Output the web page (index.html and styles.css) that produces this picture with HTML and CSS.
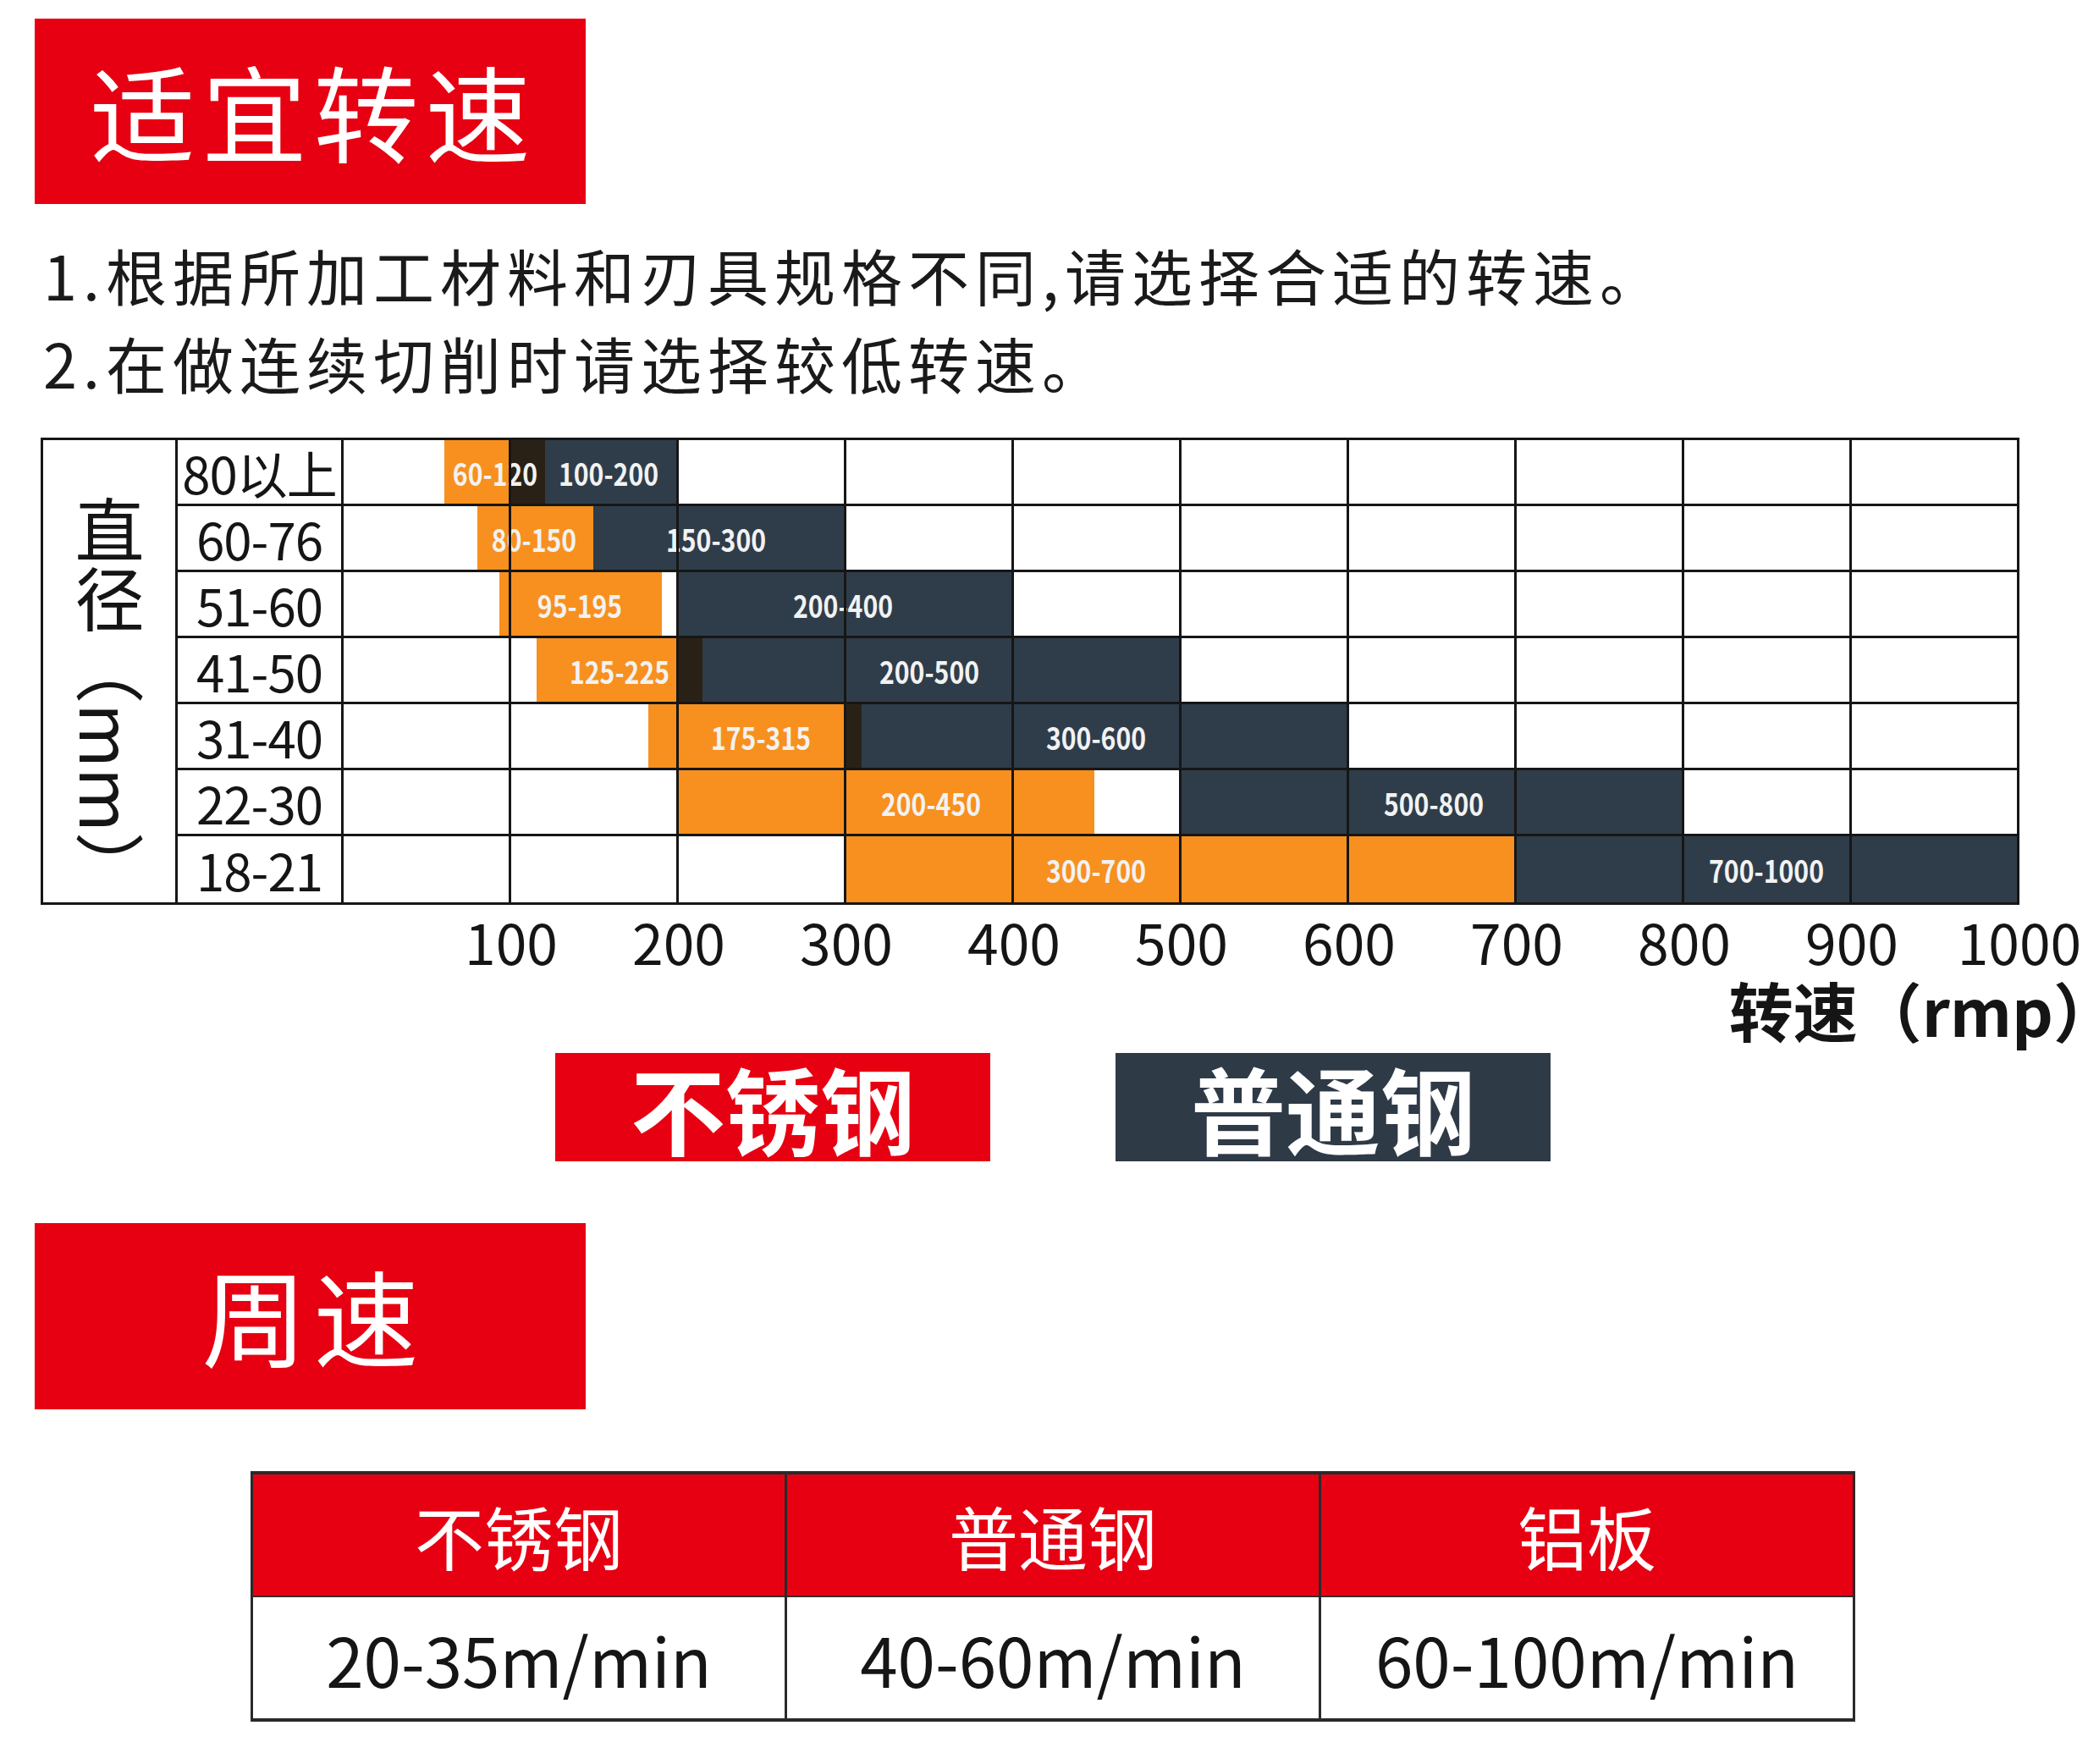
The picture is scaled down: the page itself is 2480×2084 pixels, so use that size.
FILE: index.html
```html
<!DOCTYPE html>
<html lang="zh-CN">
<head>
<meta charset="utf-8">
<title>适宜转速</title>
<link rel="stylesheet" href="styles.css">
</head>
<body>
<div class="page">
  <div class="title-box"><span>适宜转速</span></div>

  <div class="intro">
    <p>1.根据所加工材料和刃具规格不同,请选择合适的转速。</p>
    <p>2.在做连续切削时请选择较低转速。</p>
  </div>

  <div class="chart">
    <div class="ylabel"><span>直径（mm）</span></div>
    <div class="rows">
      <div class="row">
        <div class="rlabel">80以上</div>
        <div class="track">
          <div class="bar orange" style="--a:60;--b:100"></div>
          <div class="bar overlap" style="--a:100;--b:120"></div>
          <div class="bar dark" style="--a:120;--b:200"></div>
          <div class="blabel" style="--c:90.4">60-120</div>
          <div class="blabel" style="--c:158">100-200</div>
        </div>
      </div>
      <div class="row">
        <div class="rlabel">60-76</div>
        <div class="track">
          <div class="bar orange" style="--a:80;--b:149"></div>
          <div class="bar dark" style="--a:149;--b:300"></div>
          <div class="blabel" style="--c:113.6">80-150</div>
          <div class="blabel" style="--c:222">150-300</div>
        </div>
      </div>
      <div class="row">
        <div class="rlabel">51-60</div>
        <div class="track">
          <div class="bar orange" style="--a:93;--b:190"></div>
          <div class="bar dark" style="--a:200;--b:400"></div>
          <div class="blabel" style="--c:140.8">95-195</div>
          <div class="blabel" style="--c:298">200-400</div>
        </div>
      </div>
      <div class="row">
        <div class="rlabel">41-50</div>
        <div class="track">
          <div class="bar orange" style="--a:115;--b:199"></div>
          <div class="bar overlap" style="--a:199;--b:214"></div>
          <div class="bar dark" style="--a:214;--b:500"></div>
          <div class="blabel" style="--c:164.8">125-225</div>
          <div class="blabel" style="--c:349.6">200-500</div>
        </div>
      </div>
      <div class="row">
        <div class="rlabel">31-40</div>
        <div class="track">
          <div class="bar orange" style="--a:182;--b:300"></div>
          <div class="bar overlap" style="--a:300;--b:309"></div>
          <div class="bar dark" style="--a:309;--b:600"></div>
          <div class="blabel" style="--c:248.8">175-315</div>
          <div class="blabel" style="--c:448.8">300-600</div>
        </div>
      </div>
      <div class="row">
        <div class="rlabel">22-30</div>
        <div class="track">
          <div class="bar orange" style="--a:200;--b:448"></div>
          <div class="bar dark" style="--a:500;--b:800"></div>
          <div class="blabel" style="--c:350.4">200-450</div>
          <div class="blabel" style="--c:650.4">500-800</div>
        </div>
      </div>
      <div class="row">
        <div class="rlabel">18-21</div>
        <div class="track">
          <div class="bar orange" style="--a:300;--b:700"></div>
          <div class="bar dark" style="--a:700;--b:1000"></div>
          <div class="blabel" style="--c:448.8">300-700</div>
          <div class="blabel" style="--c:848.8">700-1000</div>
        </div>
      </div>
    </div>
  </div>

  <div class="axis">
    <span>100</span><span>200</span><span>300</span><span>400</span><span>500</span>
    <span>600</span><span>700</span><span>800</span><span>900</span><span>1000</span>
  </div>
  <div class="axis-title">转速（rmp<span class="close-paren">）</span></div>

  <div class="legend">
    <div class="legend-item red">不锈钢</div>
    <div class="legend-item slate">普通钢</div>
  </div>

  <div class="title-box second"><span>周速</span></div>

  <table class="speed-table">
    <thead>
      <tr><th>不锈钢</th><th>普通钢</th><th>铝板</th></tr>
    </thead>
    <tbody>
      <tr><td>20-35m/min</td><td>40-60m/min</td><td>60-100m/min</td></tr>
    </tbody>
  </table>
</div>
</body>
</html>
```

FILE: styles.css
```css
html, body {
  margin: 0;
  padding: 0;
  background: #ffffff;
  overflow-x: hidden;
}

body {
  width: 2480px;
  font-family: "Noto Sans CJK SC", "Noto Sans", sans-serif;
  color: #151515;
}

.page {
  padding-top: 22px;
}

/* red section titles */
.title-box {
  margin-left: 41px;
  width: 651px;
  height: 219px;
  background: #e60012;
  color: #ffffff;
  display: flex;
  align-items: center;
  justify-content: center;
  font-size: 124px;
  font-weight: 400;
  line-height: 1;
}

.title-box span {
  letter-spacing: 8px;
  padding-left: 8px;
  padding-bottom: 6px;
}

.title-box.second {
  margin-top: 73px;
  height: 220px;
}

/* intro text */
.intro {
  margin-top: 31px;
  padding-left: 51px;
}

.intro p {
  margin: 0;
  font-size: 72px;
  line-height: 104px;
  letter-spacing: 7px;
  color: #1a1a1a;
  white-space: nowrap;
}

/* chart */
.chart {
  margin-top: 37px;
  margin-left: 48px;
  width: 2338px;
  height: 552px;
  box-sizing: border-box;
  border: 3px solid #161616;
  display: flex;
}

.ylabel {
  width: 159px;
  box-sizing: border-box;
  border-right: 3px solid #161616;
  display: flex;
  justify-content: center;
  align-items: flex-end;
  padding-bottom: 1px;
}

.ylabel span {
  writing-mode: vertical-rl;
  text-orientation: mixed;
  font-size: 82px;
  line-height: 1;
  color: #151515;
}

.rows {
  display: flex;
  flex-direction: column;
  flex: 1;
}

.row {
  display: flex;
  height: 78px;
  box-sizing: border-box;
  border-bottom: 3px solid #161616;
}

.row:last-child {
  border-bottom: none;
}

.rlabel {
  width: 196px;
  box-sizing: border-box;
  border-right: 3px solid #161616;
  display: flex;
  align-items: center;
  justify-content: center;
  font-size: 60px;
  letter-spacing: -1px;
  line-height: 1;
  white-space: nowrap;
  color: #151515;
}

.track {
  position: relative;
  flex: 1;
  overflow: hidden;
}

.track::after {
  content: "";
  position: absolute;
  inset: 0;
  z-index: 3;
  background: repeating-linear-gradient(to right, transparent 0 195px, #161616 195px 198px);
  pointer-events: none;
}

.bar {
  position: absolute;
  top: 0;
  bottom: 0;
  left: calc(var(--a) * 1.98px);
  width: calc((var(--b) - var(--a)) * 1.98px);
  z-index: 1;
}

.bar.orange { background: #f7901e; }
.bar.dark { background: #2f3d4a; }
.bar.overlap { background: #2a2116; }

.blabel {
  position: absolute;
  top: 0;
  bottom: 0;
  left: calc(var(--c) * 1.98px);
  transform: translateX(-50%) scaleX(0.84);
  z-index: 2;
  display: flex;
  align-items: center;
  color: #f2f2f2;
  font-size: 36px;
  font-weight: 700;
  white-space: nowrap;
}

/* axis */
.axis {
  margin-top: 2px;
  margin-left: 524px;
  display: flex;
  gap: 38px;
  height: 80px;
}

.axis span {
  width: 160px;
  text-align: center;
  font-size: 66px;
  line-height: 80px;
  color: #151515;
}

.axis-title {
  margin-top: 1px;
  padding-right: 16px;
  text-align: right;
  font-size: 76px;
  font-weight: 700;
  line-height: 80px;
  color: #151515;
}

.close-paren {
  font-feature-settings: "halt" 1;
}

/* legend */
.legend {
  margin-top: 12px;
  margin-left: 656px;
  display: flex;
  gap: 148px;
}

.legend-item {
  width: 514px;
  height: 128px;
  display: flex;
  align-items: center;
  justify-content: center;
  color: #ffffff;
  font-size: 112px;
  font-weight: 700;
  line-height: 1;
}

.legend-item.red { background: #e60012; }
.legend-item.slate { background: #2e3a46; }

/* peripheral speed table */
.speed-table {
  margin-top: 73px;
  margin-left: 296px;
  width: 1896px;
  border-collapse: collapse;
  table-layout: fixed;
  border-top: 4px solid #2a2a2a;
  border-bottom: 4px solid #2a2a2a;
  border-left: 3px solid #2a2a2a;
  border-right: 3px solid #2a2a2a;
}

.speed-table th,
.speed-table td {
  border-left: 3px solid #2a2a2a;
  text-align: center;
  padding: 0;
}

.speed-table th {
  height: 143px;
  background: #e60012;
  color: #ffffff;
  font-size: 82px;
  font-weight: 400;
  line-height: 1;
  border-bottom: 2px solid #3a2a2a;
}

.speed-table td {
  height: 143px;
  background: #ffffff;
  color: #151515;
  font-size: 80px;
  font-weight: 400;
  line-height: 1;
}
```
